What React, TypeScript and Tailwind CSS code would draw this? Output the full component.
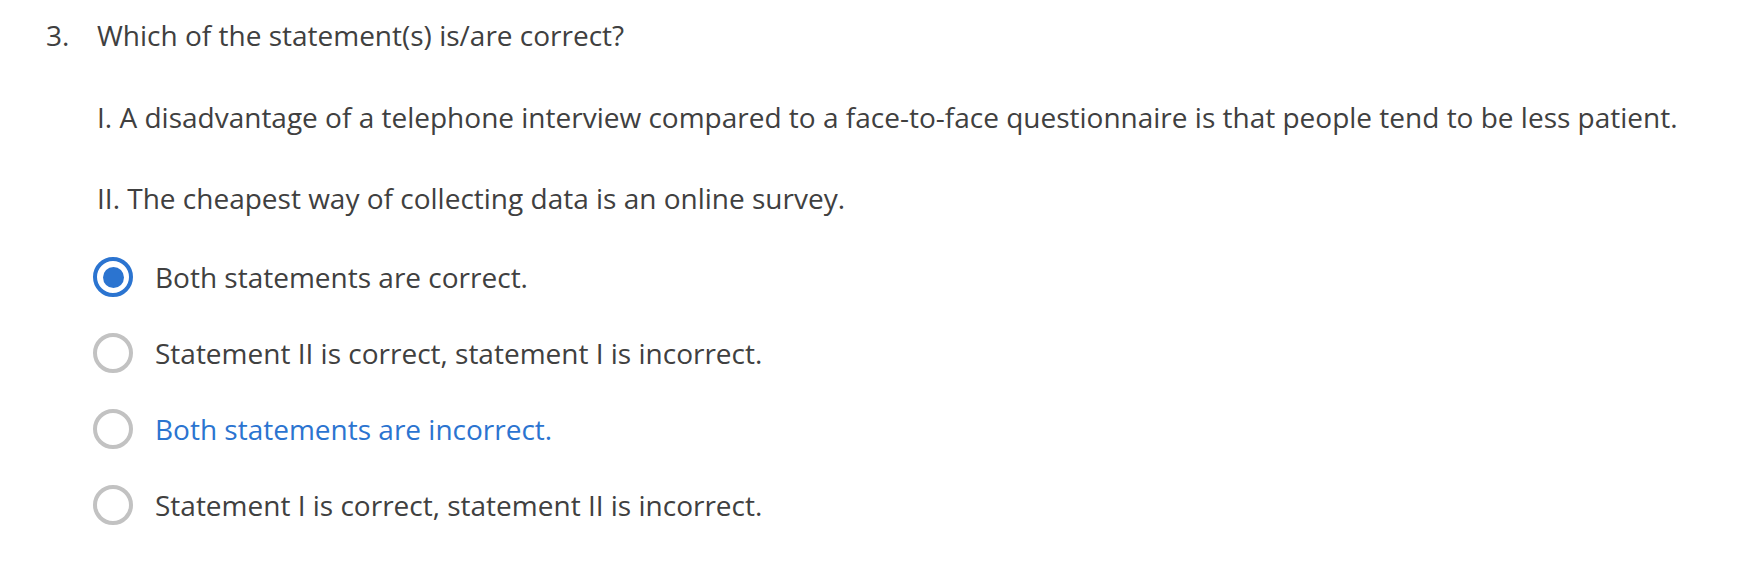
const options = [
  { label: 'Both statements are correct.', selected: true },
  { label: 'Statement II is correct, statement I is incorrect.' },
  { label: 'Both statements are incorrect.', hover: true },
  { label: 'Statement I is correct, statement II is incorrect.' },
]

export default function App() {
  return (
    <div className="w-full h-[576px] bg-white text-[#404040] text-[28px] font-['Open_Sans',sans-serif] pt-[14px]">
      <div className="flex">
        <span className="w-[97px] pl-[46px] shrink-0 leading-[42px]">3.</span>
        <div className="flex-1">
          <p className="leading-[42px]">Which of the statement(s) is/are correct?</p>
          <p className="mt-[40px] leading-[42px]">I. A disadvantage of a telephone interview compared to a face-to-face questionnaire is that people tend to be less patient.</p>
          <p className="mt-[39px] leading-[42px]">II. The cheapest way of collecting data is an online survey.</p>
        </div>
      </div>
      <div className="mt-[38px] ml-[93px] flex flex-col gap-[36px]">
        {options.map((o) => (
          <label key={o.label} className="flex items-center gap-[22px] h-[40px]">
            <span
              className={
                o.selected
                  ? 'size-[40px] rounded-full border-4 border-[#2b74d0] flex items-center justify-center shrink-0'
                  : 'size-[40px] rounded-full border-4 border-[#c2c2c2] shrink-0'
              }
            >
              {o.selected && <span className="size-[21px] rounded-full bg-[#2b74d0]" />}
            </span>
            <span className={o.hover ? 'text-[#2b74d0]' : ''}>{o.label}</span>
          </label>
        ))}
      </div>
    </div>
  )
}
